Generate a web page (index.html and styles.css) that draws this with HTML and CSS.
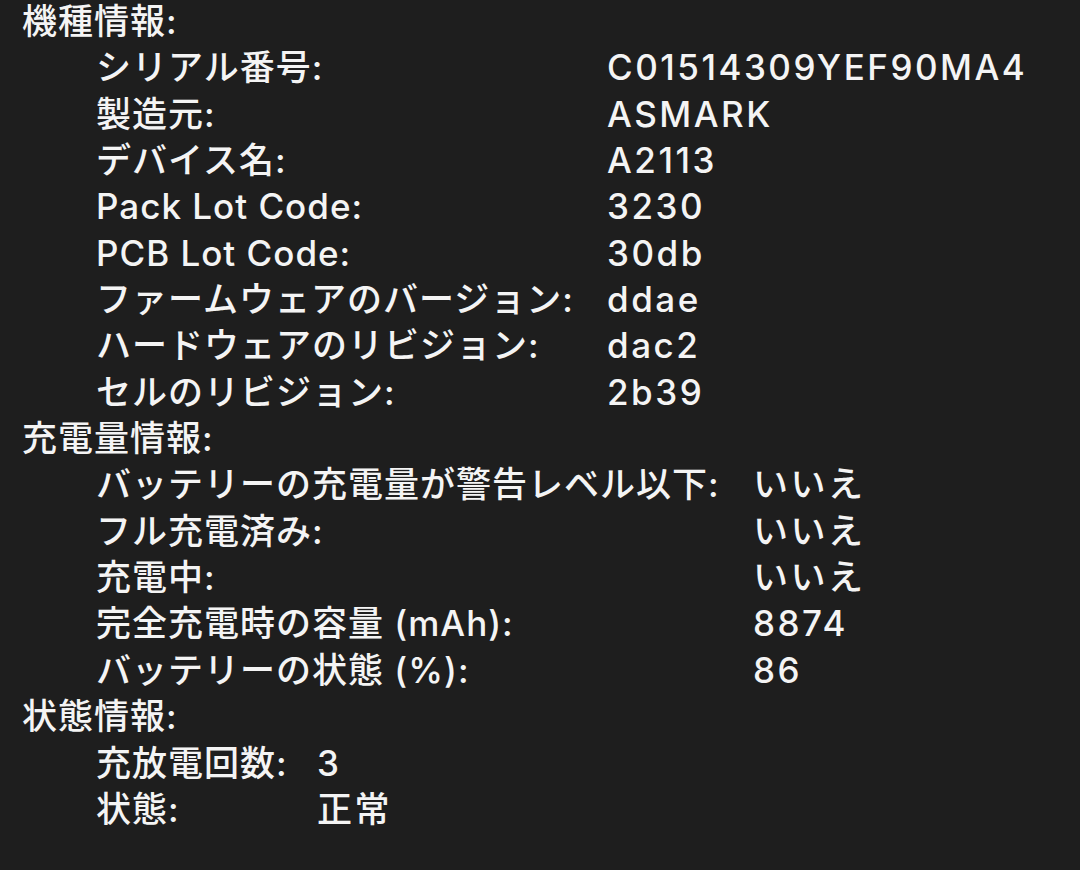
FILE: index.html
```html
<!DOCTYPE html>
<html lang="ja">
<head>
    <meta charset="UTF-8">
    <title>バッテリー情報</title>
    <link rel="stylesheet" href="styles.css">
</head>
<body>
    <div class="report">
        <div class="section model">
            <div class="section-title">機種情報:</div>
            <div class="rows">
                <div class="label">シリアル番号:</div><div class="value">C01514309YEF90MA4</div>
                <div class="label">製造元:</div><div class="value">ASMARK</div>
                <div class="label">デバイス名:</div><div class="value">A2113</div>
                <div class="label">Pack Lot Code:</div><div class="value">3230</div>
                <div class="label">PCB Lot Code:</div><div class="value">30db</div>
                <div class="label">ファームウェアのバージョン:</div><div class="value">ddae</div>
                <div class="label">ハードウェアのリビジョン:</div><div class="value">dac2</div>
                <div class="label">セルのリビジョン:</div><div class="value">2b39</div>
            </div>
        </div>
        <div class="section charge">
            <div class="section-title">充電量情報:</div>
            <div class="rows">
                <div class="label">バッテリーの充電量が警告レベル以下:</div><div class="value">いいえ</div>
                <div class="label">フル充電済み:</div><div class="value">いいえ</div>
                <div class="label">充電中:</div><div class="value">いいえ</div>
                <div class="label">完全充電時の容量 (mAh):</div><div class="value">8874</div>
                <div class="label">バッテリーの状態 (%):</div><div class="value">86</div>
            </div>
        </div>
        <div class="section health">
            <div class="section-title">状態情報:</div>
            <div class="rows">
                <div class="label">充放電回数:</div><div class="value">3</div>
                <div class="label">状態:</div><div class="value">正常</div>
            </div>
        </div>
    </div>
</body>
</html>
```

FILE: styles.css
```css
html, body {
    height: 100%;
}
body {
    margin: 0;
    background: #1e1e1e;
    color: #f4f4f4;
    font-family: 'Inter', 'Noto Sans CJK JP', sans-serif;
    font-size: 35px;
    font-weight: 500;
    letter-spacing: 1px;
    line-height: 46.35px;
}
.report {
    padding: 0 0 0 22px;
    margin-top: -2px;
}
.rows {
    display: grid;
    grid-template-columns: max-content auto;
    padding-left: 74px;
}
/* label column widths so the values line up like the original panel */
.model .rows {
    grid-template-columns: 511px auto;
}
.charge .rows {
    grid-template-columns: 657px auto;
}
.health .rows {
    grid-template-columns: 221px auto;
}
.label, .value {
    white-space: nowrap;
}
.value {
    letter-spacing: 2.5px;
}
```
